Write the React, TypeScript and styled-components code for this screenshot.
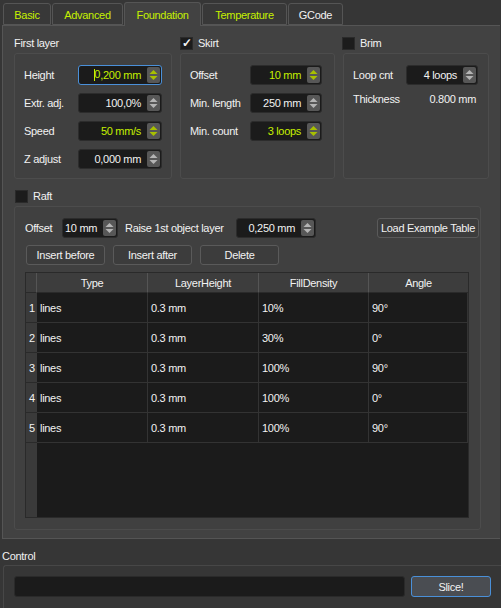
import React from "react";
import styled, { createGlobalStyle } from "styled-components";

const Global = createGlobalStyle`
  html, body { margin: 0; padding: 0; background: #363636; }
  body { font-family: "Liberation Sans", Arial, sans-serif; font-size: 11px; letter-spacing: -0.3px; color: #f2f2f2; }
  * { box-sizing: border-box; }
`;

const ACCENT = "#c6f000";

const Root = styled.div`
  width: 501px;
  height: 608px;
  overflow: hidden;
  background: #363636;
  display: flex;
  flex-direction: column;
`;

const TabBar = styled.div`
  display: flex;
  align-items: flex-end;
  height: 25px;
  padding-left: 3px;
  position: relative;
  z-index: 1;
`;

const Tab = styled.div<{ $w: number; $active?: boolean; $gap?: number; $accent?: boolean }>`
  width: ${(p) => p.$w}px;
  margin-right: ${(p) => p.$gap ?? 1}px;
  height: ${(p) => (p.$active ? 24 : 22)}px;
  margin-bottom: ${(p) => (p.$active ? -1 : 0)}px;
  border: 1px solid #555555;
  border-bottom: ${(p) => (p.$active ? "none" : "1px solid #555555")};
  border-radius: 3px 3px 0 0;
  background: ${(p) => (p.$active ? "#424242" : "#383838")};
  color: ${(p) => (p.$accent ? ACCENT : "#f2f2f2")};
  display: flex;
  align-items: center;
  justify-content: center;
  padding-top: ${(p) => (p.$active ? 0 : 2)}px;
`;

const Pane = styled.div`
  margin: 0 1px 0 2px;
  height: 514px;
  border: 1px solid #555555;
  border-right: none;
  background: #424242;
  padding: 7px 10px 0 11px;
  display: flex;
  flex-direction: column;
`;

const TopRow = styled.div`
  display: flex;
  gap: 8px;
`;

const Column = styled.div<{ $w: number }>`
  width: ${(p) => p.$w}px;
  display: flex;
  flex-direction: column;
`;

const GroupTitle = styled.div<{ $ml?: number }>`
  height: 20px;
  display: flex;
  align-items: center;
  gap: 5px;
  margin-left: ${(p) => p.$ml ?? 0}px;
`;

const Group = styled.div<{ $h: number }>`
  height: ${(p) => p.$h}px;
  border: 1px solid #4c4c4c;
  border-radius: 3px;
  background: #404040;
  padding: 11px 10px 0 9px;
  display: flex;
  flex-direction: column;
  gap: 8px;
`;

const Check = styled.div`
  width: 13px;
  height: 13px;
  background: #1c1c1c;
  border: 1px solid #2a2a2a;
  color: #f2f2f2;
  font-size: 12px;
  line-height: 11px;
  text-align: center;
  font-weight: bold;
  letter-spacing: 0;
`;

const FieldRow = styled.div<{ $labelW: number; $h?: number }>`
  display: grid;
  grid-template-columns: ${(p) => p.$labelW}px 1fr;
  align-items: center;
  height: ${(p) => p.$h ?? 20}px;
  white-space: nowrap;
`;

const Label = styled.span<{ $w?: number }>`
  white-space: nowrap;
  flex: none;
  width: ${(p) => (p.$w ? `${p.$w}px` : "auto")};
`;

const SpinWrap = styled.div<{ $w: number; $focus?: boolean }>`
  width: ${(p) => p.$w}px;
  height: 20px;
  flex: none;
  background: #1b1b1b;
  border: 1px solid ${(p) => (p.$focus ? "#4a90d9" : "#2c2c2c")};
  border-radius: 3px;
  display: flex;
  align-items: center;
  padding: 1px 1px 1px 2px;
`;

const SpinText = styled.div<{ $accent?: boolean }>`
  flex: 1;
  text-align: right;
  padding-right: 6px;
  color: ${(p) => (p.$accent ? ACCENT : "#f2f2f2")};
  white-space: nowrap;
  overflow: hidden;
`;

const SpinButtons = styled.div`
  width: 13px;
  height: 16px;
  background: #575757;
  border-radius: 2px;
  display: flex;
  align-items: center;
  justify-content: center;
`;

const Caret = styled.span`
  display: inline-block;
  width: 6px;
  height: 12px;
  vertical-align: -2px;
  border-left: 1px solid ${ACCENT};
  position: relative;
  &::after {
    content: "0";
    position: absolute;
    left: -1px;
    top: -1px;
    color: ${ACCENT};
  }
`;

const Arrows = ({ color }: { color: string }) => (
  <svg width="9" height="12" viewBox="0 0 9 12">
    <polygon points="4.5,1 8.5,5 0.5,5" fill={color} />
    <polygon points="0.5,7 8.5,7 4.5,11" fill={color} />
  </svg>
);

const Spin = ({
  w,
  value,
  accent,
  focus,
}: {
  w: number;
  value: string;
  accent?: boolean;
  focus?: boolean;
}) => (
  <SpinWrap $w={w} $focus={focus}>
    <SpinText $accent={accent}>
      {focus ? <Caret /> : null}
      {focus ? value.slice(1) : value}
    </SpinText>
    <SpinButtons>
      <Arrows color={accent ? "#a8c000" : "#b4b4b4"} />
    </SpinButtons>
  </SpinWrap>
);

const StaticValue = styled.span`
  text-align: right;
  padding-right: 2px;
`;

const RaftTitle = styled.div`
  margin-top: 10px;
  height: 14px;
  display: flex;
  align-items: center;
  gap: 5px;
  margin-left: 1px;
`;

const RaftGroup = styled.div`
  margin-top: 3px;
  margin-right: 9px;
  height: 324px;
  border: 1px solid #4c4c4c;
  border-radius: 3px;
  background: #404040;
  padding: 11px 11px 11px 10px;
  display: flex;
  flex-direction: column;
`;

const RaftRow = styled.div`
  display: flex;
  align-items: center;
  height: 20px;
  gap: 6px;
`;

const Button = styled.button<{ $w: number; $ml?: number }>`
  width: ${(p) => p.$w}px;
  height: 20px;
  flex: none;
  margin-left: ${(p) => p.$ml ?? 0}px;
  font: inherit;
  letter-spacing: inherit;
  color: #f2f2f2;
  background: #3c3c3c;
  border: 1px solid #5a5a5a;
  border-radius: 3px;
  padding: 0;
  white-space: nowrap;
`;

const ButtonRow = styled.div`
  display: flex;
  gap: 8px;
  margin-top: 7px;
  margin-left: 1px;
`;

const Table = styled.div`
  margin-top: 7px;
  flex: 1;
  border: 1px solid #2a2a2a;
  background: #1b1b1b;
  display: grid;
  grid-template-columns: 11px 111px 111px 110px 1fr;
  grid-template-rows: 20px repeat(5, 30px) 1fr;
`;

const HeadCell = styled.div`
  background: #3d3d3d;
  border-right: 1px solid #555555;
  border-bottom: 1px solid #2a2a2a;
  display: flex;
  align-items: center;
  justify-content: center;
  &:nth-child(5) {
    border-right: none;
  }
`;

const RowHead = styled.div`
  background: #3a3a3a;
  border-bottom: 1px solid #2a2a2a;
  display: flex;
  align-items: center;
  justify-content: center;
  padding-left: 1px;
`;

const Cell = styled.div`
  border-right: 1px solid #333333;
  border-bottom: 1px solid #333333;
  display: flex;
  align-items: center;
  padding-left: 3px;
`;

const Filler = styled.div<{ $head?: boolean }>`
  background: ${(p) => (p.$head ? "#3a3a3a" : "transparent")};
`;

const ControlLabel = styled.div`
  height: 26px;
  display: flex;
  align-items: flex-end;
  padding-left: 2px;
  padding-bottom: 3px;
`;

const ControlGroup = styled.div`
  margin-left: 3px;
  flex: 1;
  border-top: 1px solid #474747;
  border-left: 1px solid #474747;
  border-radius: 3px 0 0 0;
  padding: 10px 10px 0 10px;
  display: flex;
  gap: 6px;
  background: #363636;
`;

const Progress = styled.div`
  width: 391px;
  height: 21px;
  background: #1b1b1b;
  border: 1px solid #2a2a2a;
  border-radius: 3px;
`;

const SliceButton = styled.button`
  width: 80px;
  height: 21px;
  font: inherit;
  letter-spacing: inherit;
  color: #f2f2f2;
  background: #4a4d52;
  border: 1px solid #4a90d9;
  border-radius: 3px;
`;

const rows = [
  ["lines", "0.3 mm", "10%", "90°"],
  ["lines", "0.3 mm", "30%", "0°"],
  ["lines", "0.3 mm", "100%", "90°"],
  ["lines", "0.3 mm", "100%", "0°"],
  ["lines", "0.3 mm", "100%", "90°"],
];

export default function App() {
  return (
    <Root>
      <Global />
      <TabBar>
        <Tab $w={48} $accent>Basic</Tab>
        <Tab $w={71} $accent>Advanced</Tab>
        <Tab $w={77} $accent $active>Foundation</Tab>
        <Tab $w={85} $accent>Temperature</Tab>
        <Tab $w={55}>GCode</Tab>
      </TabBar>
      <Pane>
        <TopRow>
          <Column $w={158}>
            <GroupTitle>First layer</GroupTitle>
            <Group $h={126}>
              <FieldRow $labelW={54}>
                <Label>Height</Label>
                <Spin w={84} value="0,200 mm" accent focus />
              </FieldRow>
              <FieldRow $labelW={54}>
                <Label>Extr. adj.</Label>
                <Spin w={84} value="100,0%" />
              </FieldRow>
              <FieldRow $labelW={54}>
                <Label>Speed</Label>
                <Spin w={84} value="50 mm/s" accent />
              </FieldRow>
              <FieldRow $labelW={54}>
                <Label>Z adjust</Label>
                <Spin w={84} value="0,000 mm" />
              </FieldRow>
            </Group>
          </Column>
          <Column $w={155}>
            <GroupTitle>
              <Check>✓</Check>
              Skirt
            </GroupTitle>
            <Group $h={126}>
              <FieldRow $labelW={60}>
                <Label>Offset</Label>
                <Spin w={72} value="10 mm" accent />
              </FieldRow>
              <FieldRow $labelW={60}>
                <Label>Min. length</Label>
                <Spin w={72} value="250 mm" />
              </FieldRow>
              <FieldRow $labelW={60}>
                <Label>Min. count</Label>
                <Spin w={72} value="3 loops" accent />
              </FieldRow>
            </Group>
          </Column>
          <Column $w={146}>
            <GroupTitle $ml={-1}>
              <Check />
              Brim
            </GroupTitle>
            <Group $h={126}>
              <FieldRow $labelW={53}>
                <Label>Loop cnt</Label>
                <Spin w={72} value="4 loops" />
              </FieldRow>
              <FieldRow $labelW={53} $h={12}>
                <Label>Thickness</Label>
                <StaticValue>0.800 mm</StaticValue>
              </FieldRow>
            </Group>
          </Column>
        </TopRow>
        <RaftTitle>
          <Check />
          Raft
        </RaftTitle>
        <RaftGroup>
          <RaftRow>
            <Label $w={31}>Offset</Label>
            <Spin w={56} value="10 mm" />
            <Label $w={105} style={{ marginLeft: 1 }}>Raise 1st object layer</Label>
            <Spin w={80} value="0,250 mm" />
            <Button $w={102} $ml={55}>Load Example Table</Button>
          </RaftRow>
          <ButtonRow>
            <Button $w={79}>Insert before</Button>
            <Button $w={79}>Insert after</Button>
            <Button $w={79}>Delete</Button>
          </ButtonRow>
          <Table>
            <HeadCell />
            <HeadCell>Type</HeadCell>
            <HeadCell>LayerHeight</HeadCell>
            <HeadCell>FillDensity</HeadCell>
            <HeadCell>Angle</HeadCell>
            {rows.map((r, i) => (
              <React.Fragment key={i}>
                <RowHead>{i + 1}</RowHead>
                {r.map((c, j) => (
                  <Cell key={j}>{c}</Cell>
                ))}
              </React.Fragment>
            ))}
            <Filler $head />
            <Filler />
            <Filler />
            <Filler />
            <Filler />
          </Table>
        </RaftGroup>
      </Pane>
      <ControlLabel>Control</ControlLabel>
      <ControlGroup>
        <Progress />
        <SliceButton>Slice!</SliceButton>
      </ControlGroup>
    </Root>
  );
}
